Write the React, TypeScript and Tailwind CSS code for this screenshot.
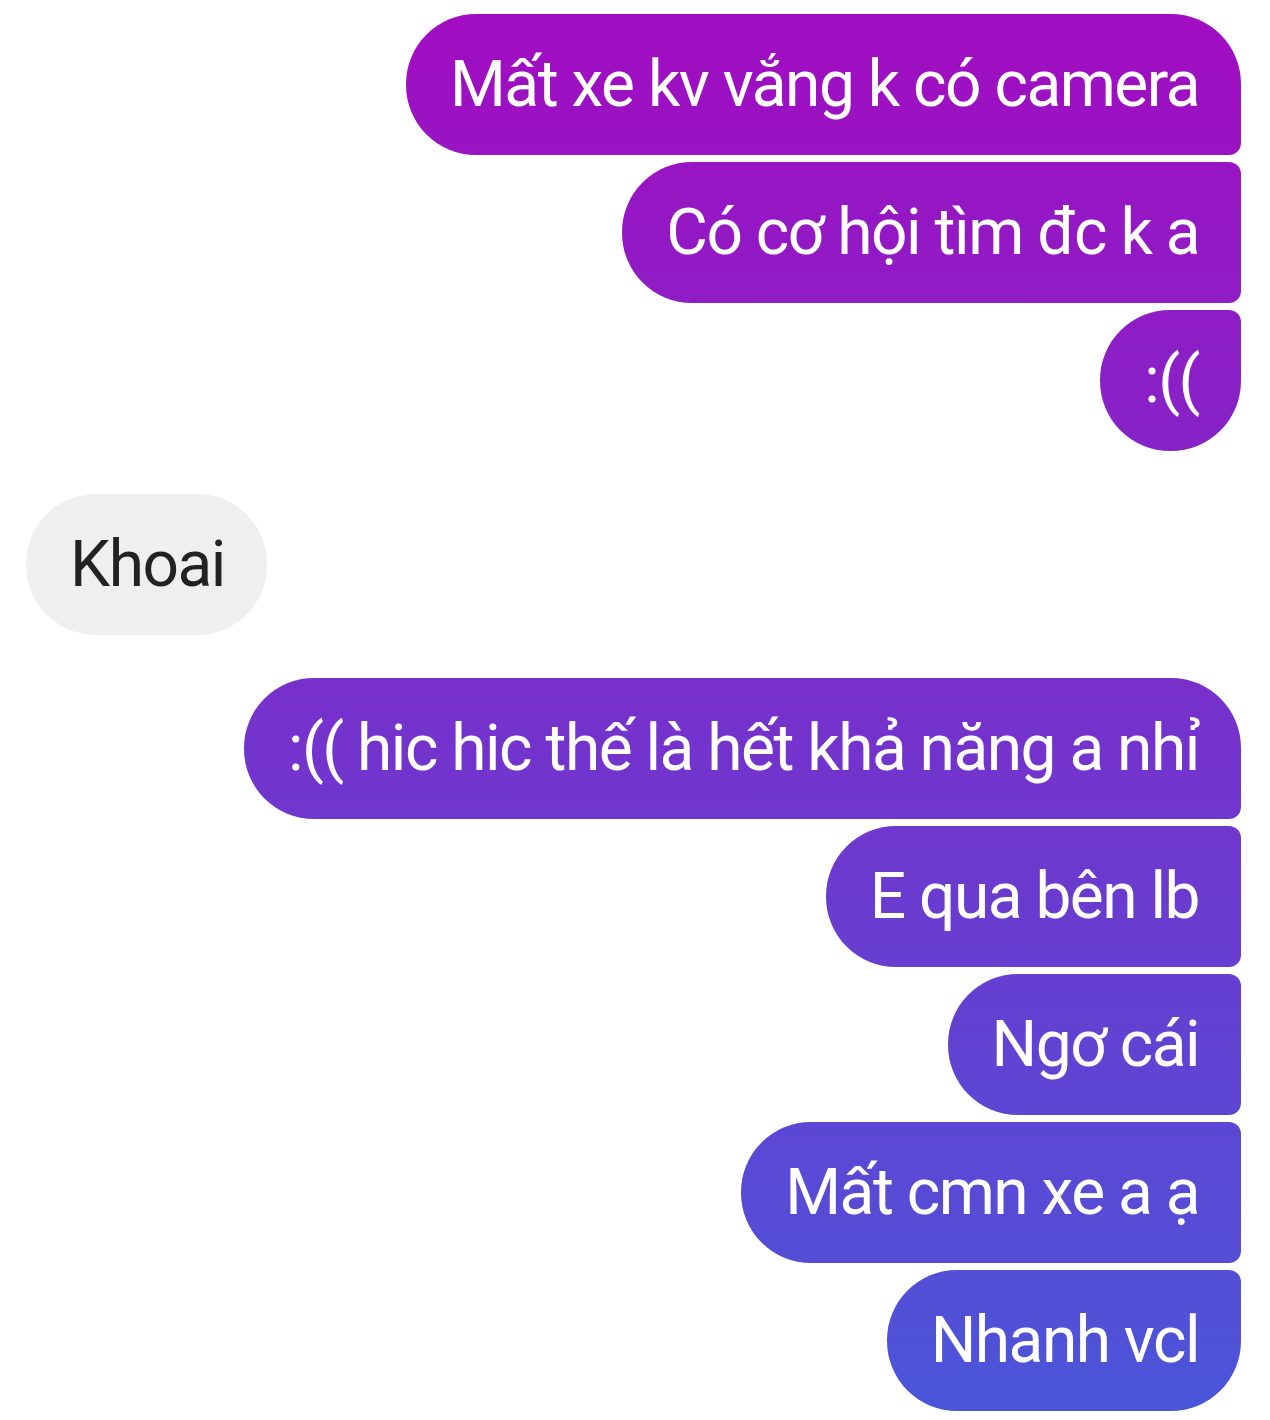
import React from "react";

type Msg = { text: string; pos: "first" | "mid" | "last" | "single" };

const groupOne: Msg[] = [
  { text: "Mất xe kv vắng k có camera", pos: "first" },
  { text: "Có cơ hội tìm đc k a", pos: "mid" },
  { text: ":((", pos: "last" },
];

const groupTwo: Msg[] = [
  { text: ":(( hic hic thế là hết khả năng a nhỉ", pos: "first" },
  { text: "E qua bên lb", pos: "mid" },
  { text: "Ngơ cái", pos: "mid" },
  { text: "Mất cmn xe a ạ", pos: "mid" },
  { text: "Nhanh vcl", pos: "last" },
];

// corner shapes for outgoing bubbles, right side gets tight corners inside a group
const cornerClass = {
  first: "rounded-l-[70px] rounded-tr-[70px] rounded-br-[12px]",
  mid: "rounded-l-[70px] rounded-r-[12px]",
  last: "rounded-l-[70px] rounded-tr-[12px] rounded-br-[70px]",
  single: "rounded-[70px]",
};

const OutBubble = ({ msg }: { msg: Msg }) => (
  <div
    className={`h-[141px] flex items-center pl-[44px] pr-[42px] text-white text-[64px] tracking-[-1.5px] whitespace-nowrap bg-fixed bg-[linear-gradient(to_bottom,#a20cc0_0px,#7631cc_710px,#4a56d9_1420px)] ${cornerClass[msg.pos]}`}
  >
    {msg.text}
  </div>
);

const OutGroup = ({ msgs }: { msgs: Msg[] }) => (
  <div className="flex flex-col items-end gap-[7px]">
    {msgs.map((m, i) => (
      <OutBubble key={i} msg={m} />
    ))}
  </div>
);

export default function App() {
  return (
    <div
      className="w-[1270px] h-[1420px] bg-white overflow-hidden"
      style={{ fontFamily: "Roboto, 'Noto Sans', sans-serif" }}
    >
      <div className="pt-[14px] pl-[26px] pr-[29px] flex flex-col gap-[43px]">
        <OutGroup msgs={groupOne} />

        {/* incoming message */}
        <div className="flex">
          <div className="h-[141px] flex items-center pl-[44px] pr-[42px] rounded-[70px] bg-[#efefef] text-[#222222] text-[64px] tracking-[-1.5px]">
            Khoai
          </div>
        </div>

        <OutGroup msgs={groupTwo} />
      </div>
    </div>
  );
}
